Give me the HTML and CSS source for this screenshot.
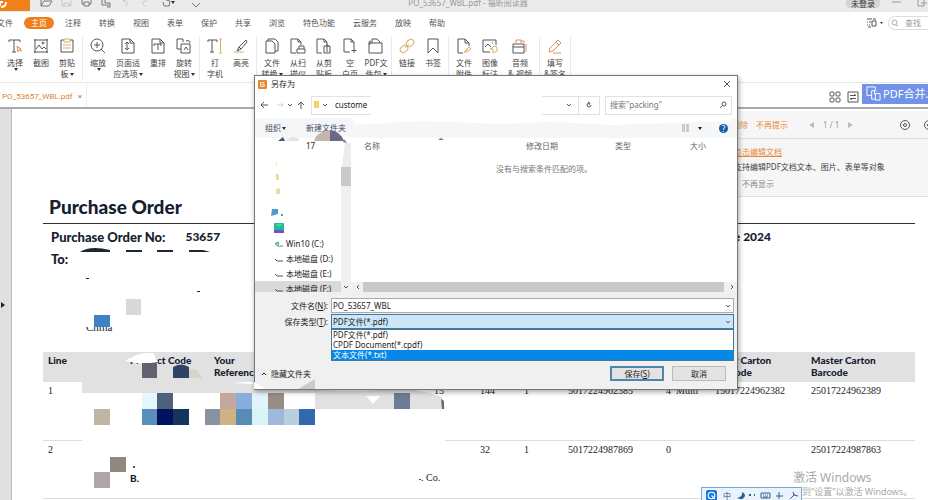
FILE: index.html
```html
<!DOCTYPE html>
<html lang="zh-CN">
<head>
<meta charset="utf-8">
<title>PO_53657_WBL.pdf - 福昕阅读器</title>
<link rel="stylesheet" href="styles.css">
</head>
<body>
<header class="titlebar">
  <div class="brand"><svg viewBox="0 0 30 12"><path d="M0 6V2h3M1 7c3 0 5-1 5-5" /></svg></div>
  <svg class="quick" viewBox="0 0 170 12">
    <path d="M3 0v6h8l3-5H6L3 6"/><g opacity=".3"><path d="M24 0v6h9V0M26 6V3h5v3"/></g>
    <path d="M44 0v4h2M53 0v4h-2M46 2h5v4h-5zM64 0v5h7M67 0v3h5v4h-3"/>
    <g opacity=".3"><path d="M85 1l3-2M85 1c4 0 6 2 2 5M109 1c-4 0-6 2-2 5"/></g>
    <path d="M125 2l1 4h5l1-5-4-1v-2M154 3l4 4 4-4"/><path class="fill" d="M133 1h4l-2 3z"/>
  </svg>
  <div class="window-title">PO_53657_WBL.pdf - 福昕阅读器</div>
  <button class="login">未登录</button>
  <svg class="winctl" viewBox="0 0 40 12"><path d="M4 2h9M30 0v6h6V0M33 3h6"/></svg>
</header>

<nav class="menubar">
  <a href="#">文件</a><a href="#" class="active">主页</a><a href="#">注释</a><a href="#">转换</a><a href="#">视图</a><a href="#">表单</a><a href="#">保护</a><a href="#">共享</a><a href="#">浏览</a><a href="#">特色功能</a><a href="#">云服务</a><a href="#">放映</a><a href="#">帮助</a>
  <div class="menu-right">
    <svg class="i-tell" viewBox="0 0 18 10"><path d="M1 1h5M1 4h1M1 7h1M3 4h2M3 7h1M6 3h4v5H6zM7 1h3M2 9h3"/><path class="fill" d="M14 4h3l-1.500 2z"/></svg>
    <label class="find"><svg viewBox="0 0 8 8"><circle cx="3.500" cy="3.500" r="2.500"/><path d="M5 6l2 1"/></svg><input type="text" placeholder="查找" aria-label="查找"></label>
  </div>
</nav>

<section class="ribbon">
  <div class="group">
    <button><svg viewBox="0 0 16 16"><path d="M2 4V2h11v2M7 2v12M5 14h4"/><path class="o" d="M10 8l1 6 1-2 3 1zM10 8l4 3"/></svg>选择<i></i></button>
    <button><svg viewBox="0 0 16 16"><path d="M1 2h14M2 1v14M14 1v14M1 14h14M3 11l3-4 3 4 2-2 2 2"/><circle cx="10" cy="5" r="1"/></svg>截图</button>
    <button><svg viewBox="0 0 16 16"><path d="M5 2H2v12h12V2h-3"/><path class="y" d="M5 1h6v3H5zM4 7h8M4 10h8"/></svg>剪贴<span>板<i></i></span></button>
  </div>
  <div class="group">
    <button><svg viewBox="0 0 16 16"><circle cx="7" cy="7" r="6"/><path d="M4 7h6M7 4v6M11 11l4 4"/></svg>缩放<i></i></button>
    <button class="wide"><svg viewBox="0 0 16 16"><path d="M2 1h8l4 4v10H2zM10 1v4h4M7 4v8M5 6l2-2 2 2M5 10l2 2 2-2"/></svg>页面适<span>应选项<i></i></span></button>
    <button><svg viewBox="0 0 16 16"><path d="M2 1h8l4 4v10H2zM10 1v4h4M4 8V6h7v2M8 6v6"/></svg>重排</button>
    <button><svg viewBox="0 0 16 16"><path d="M7 1H1v10h4M7 1v3M5 6h9v9H5zM10 3c3-1 4 0 4 2M8 12l2-3 2 3"/></svg>旋转<span>视图<i></i></span></button>
  </div>
  <div class="group">
    <button><svg viewBox="0 0 16 16"><path d="M1 4V2h9v2M5 2v12M3 14h4"/><path class="y" d="M12 1h3M13.500 1v14M12 15h3"/></svg>打<span>字机</span></button>
    <button><svg viewBox="0 0 16 16"><path d="M13 2l-7 7-2 4 4-2 6-7zM6 9l2 2"/><path class="y" d="M1 14h10"/></svg>高亮</button>
  </div>
  <div class="group">
    <button><svg viewBox="0 0 16 16"><path d="M4 3V1h7l3 3v9h-3M2 3h6l3 3v9H2z"/></svg>文件<span>转换<i></i></span></button>
    <button><svg viewBox="0 0 16 16"><path d="M6 15H1V1h7l3 3v3M8 1v3h3M7 11h8v4H7zM9 11V8h5v3"/></svg>从扫<span>描仪</span></button>
    <button><svg viewBox="0 0 16 16"><path d="M6 15H1V1h7l3 3v3M8 1v3h3M8 8h6v7H8zM10 7h2v2h-2M10 11h2M10 13h2"/></svg>从剪<span>贴板</span></button>
    <button><svg viewBox="0 0 16 16"><path d="M8 14H2V1h7l3 3v6M9 1v3h3M12 10v5M9.500 12.500h5"/></svg>空<span>白页</span></button>
    <button><svg viewBox="0 0 16 16"><path d="M4 5V1h5l3 3v1M1 5h13v10H1V4l2-1M1 7l2-2"/></svg>PDF文<span>件包<i></i></span></button>
  </div>
  <div class="group">
    <button><svg class="y" viewBox="0 0 16 16"><rect x="7" y="2" width="8" height="6" rx="3" transform="rotate(-40 11 5)"/><rect x="1" y="8" width="8" height="6" rx="3" transform="rotate(-40 5 11)"/><path d="M6 10l4-4"/></svg>链接</button>
    <button><svg viewBox="0 0 16 16"><path d="M3 1h10v14l-5-5-5 5z"/></svg>书签</button>
  </div>
  <div class="group">
    <button><svg viewBox="0 0 16 16"><path d="M7 15H2V1h7l4 4v3M9 1v4h4"/><path class="y" d="M8 14l5-5 2 2-4 3H8l4-3"/></svg>文件<span>附件</span></button>
    <button><svg viewBox="0 0 16 16"><path d="M8 14H1V2h13v5M3 9l3-3 3 3M10 5h1"/><path class="y" d="M8 11h3v4l4-2V9l-3-1-2 2z"/></svg>图像<span>标注</span></button>
    <button class="wide"><svg viewBox="0 0 16 16"><path class="o" d="M4 5V2h5v3M9 3h3v2M14 6v8"/><path d="M1 6h11v9H1zM1 9h11"/></svg>音频<span>&amp; 视频</span></button>
  </div>
  <div class="group">
    <button><svg class="o" viewBox="0 0 16 16"><path d="M3 10l8-8 3 3-8 8-4 1zM9 4l3 3M6 15h8"/></svg>填写<span>&amp;签名</span></button>
  </div>
</section>

<div class="tabs">
  <a class="tab" href="#">PO_53657_WBL.pdf<b>×</b></a>
  <svg class="i-view" viewBox="0 0 12 12"><rect x="1" y="1" width="4" height="4" rx="1"/><rect x="7" y="1" width="4" height="4" rx="1"/><rect x="1" y="7" width="4" height="4" rx="1"/><rect x="7" y="7" width="4" height="4" rx="1"/></svg>
  <svg class="i-view" viewBox="0 0 12 12"><path d="M1 1h10v10H1zM3 4.500h6l-2-1M9 7.500H3l2 1"/></svg>
  <button class="merge"><svg viewBox="0 0 16 16"><path d="M6 10H1V1h9v3M6 5h5M6 5v9h4M9 5v4M10 8h5v7h-5z"/></svg>PDF合并...</button>
</div>

<main class="workspace">
  <button class="expand" aria-label="展开"></button>
  <article class="page">
    <h1>Purchase Order</h1>
    <div class="order-line"><span>Purchase Order No:</span><span class="num">53657</span><span class="date">June 2024</span></div>
    <p class="to">To:</p>
    <p class="country">China</p>
    <table>
      <colgroup><col class="c1"><col class="c2"><col class="c3"><col class="c4"><col class="c5"><col class="c5"><col class="c6"><col class="c7"><col class="c8"><col class="c9"><col></colgroup>
      <thead><tr><th>Line</th><th>Product Code</th><th>Your<br>Reference</th><th></th><th></th><th></th><th></th><th></th><th></th><th>Inner Carton<br>Barcode</th><th>Master Carton<br>Barcode</th></tr></thead>
      <tbody>
        <tr><td>1</td><td></td><td></td><td>15</td><td>144</td><td>1</td><td>5017224962385</td><td>4</td><td>Multi</td><td>15017224962382</td><td>25017224962389</td></tr>
        <tr><td>2</td><td></td><td></td><td></td><td>32</td><td>1</td><td>5017224987869</td><td>0</td><td></td><td></td><td>25017224987863</td></tr>
      </tbody>
    </table>
  </article>
</main>

<!-- Redacted areas of the order -->
<svg class="redaction" viewBox="0 0 928 500" width="928" height="500">
  <g fill="#1d2630"><path d="M80 252q10-7 30-2v2zM126 250h16v2h-16zM157 250h16v2h-16zM189 250h14l7 2h-21zM86 278h3v1h-3zM197 291h3v1h-3z"/></g>
  <path fill="#fff" d="M84 317h34v10H84zM82 393h348l15 6v44H82zM82 453h340v32H82z"/>
  <path fill="#e1e1e1" d="M82 382h172v7h154l22 4 12 4 3 12H315v-16H82z"/>
  <path fill="#fff" d="M125 361q12-9 28-8l5 9-16 2zM366 396h14l-7 8zM317 389h70q-15 3-70 1zM231 383l14-1h8v2z"/>
  <path fill="#d8d8d8" d="M126 299h15v16h-15z"/><path fill="#3e82c6" d="M94 315h16v12H94z"/>
  <path fill="#656070" d="M142 363h15v15h-15z"/><path fill="#2d4468" d="M173 378v-11q8-5 16 0v11z"/><path fill="#d8d2cb" d="M189 378v-9l7 0 6 9z"/>
  <path fill="#e3f7fc" d="M142 393h15v16h-15z"/><path fill="#4e627e" d="M157 393h16v16h-16z"/>
  <path fill="#c6a79e" d="M220 393h16v16h-16z"/><path fill="#89aede" d="M236 393h16v16h-16z"/><path fill="#e0f4fa" d="M252 393h16v16h-16z"/><path fill="#998b86" d="M268 393h16v16h-16z"/>
  <path fill="#c0b5a0" d="M94 409h16v16H94z"/><path fill="#598ebd" d="M142 409h15v16h-15z"/><path fill="#00145e" d="M157 409h16v16h-16z"/><path fill="#14355e" d="M173 409h16v16h-16z"/>
  <path fill="#8793a3" d="M205 409h15v16h-15z"/><path fill="#d0b182" d="M220 409h16v16h-16z"/><path fill="#588cb4" d="M236 409h16v16h-16z"/><path fill="#d8f4f5" d="M252 409h16v16h-16z"/><path fill="#9fb9da" d="M268 409h16v16h-16z"/><path fill="#b9cfdd" d="M284 409h15v16h-15z"/><path fill="#3269ae" d="M299 409h16v16h-16z"/>
  <path fill="#6a7c98" d="M394 393h16v16h-16z"/><path fill="#656b73" d="M441 399l3 2v8h-2z"/>
  <path fill="#8e887d" d="M110 457h16v15h-16z"/><path fill="#b0a5a7" d="M94 472h16v16H94z"/><path fill="#555" d="M133 466h2v2h-2zM419 479h2v1h-2z"/>
</svg>
<div class="fragment">B.</div>
<div class="fragment tail">. Co.</div>

<aside class="hints">
  <div class="hint-bar"><a href="#">删除</a><a href="#">不再提示</a><span class="pager"><i class="prev"></i>1 / 1<i class="next"></i></span>
    <svg viewBox="0 0 12 12"><circle cx="6" cy="6" r="4.500"/><circle cx="6" cy="6" r="1.500"/></svg><svg viewBox="0 0 12 12"><circle cx="6" cy="6" r="4.500"/><circle cx="6" cy="6" r="1.500"/></svg></div>
  <div class="hint-body"><a href="#">点击编辑文档</a><p>支持编辑PDF文档文本、图片、表单等对象</p><p class="mute">不再显示</p></div>
</aside>

<section class="dialog" role="dialog" aria-label="另存为">
  <div class="d-title"><svg viewBox="0 0 10 10"><rect width="10" height="10" rx="1"/><path d="M7 3H3v4h4V5H5"/></svg><span>另存为</span><button aria-label="关闭"><svg viewBox="0 0 8 8"><path d="M1 1l6 6M7 1l-6 6"/></svg></button></div>
  <div class="d-address">
    <svg class="arrows" viewBox="0 0 50 10"><path d="M8 5H1M4 2L1 5l3 3"/><path opacity=".25" d="M17 5h6M21 3l2 2-2 2"/><path d="M28 4l2 2 2-2M41 9V2M38 5l3-3 3 3"/></svg>
    <div class="path"><svg viewBox="0 0 20 10"><path class="folder" d="M2 1h5v7H2z"/><path d="M11 4l2 2 2-2"/></svg><span>custome</span><svg class="drop" viewBox="0 0 8 8"><path d="M2 3l2 2 2-2"/></svg><button aria-label="刷新"><svg viewBox="0 0 8 8"><path d="M4 2a2 2 0 1 0 2 2M3 1l2 1-1 2"/></svg></button></div>
    <label class="search"><input type="text" placeholder='搜索"packing"' aria-label="搜索"><svg viewBox="0 0 8 8"><circle cx="5" cy="3" r="2"/><path d="M3 5L1 7"/></svg></label>
  </div>
  <div class="d-tools"><button>组织<i></i></button><button>新建文件夹</button><svg class="layout" viewBox="0 0 24 10"><path class="g" d="M1 1h3v8H1zM5 1h3v8H5z"/><path class="k" d="M17 4h4l-2 3z"/></svg><button class="help" aria-label="帮助">?</button></div>
  <div class="d-body">
    <ul class="drives">
      <li><svg viewBox="0 0 10 8"><path class="t" d="M1 4l3-2 1 2zM2 5l2 1h5"/></svg>Win10 (C:)</li>
      <li><svg viewBox="0 0 10 8"><path d="M1 4l2 2h6"/></svg>本地磁盘 (D:)</li>
      <li><svg viewBox="0 0 10 8"><path d="M1 4l2 2h6"/></svg>本地磁盘 (E:)</li>
      <li><svg viewBox="0 0 10 8"><path d="M1 4l2 2h6"/></svg>本地磁盘 (F:)</li>
    </ul>
    <div class="vbar"><div class="thumb"></div><svg viewBox="0 0 8 8"><path d="M2 3l2 2 2-2"/></svg></div>
    <div class="files">
      <div class="cols"><span>名称</span><span>修改日期</span><span>类型</span><span>大小</span></div>
      <p>没有与搜索条件匹配的项。</p>
      <div class="hbar"><svg viewBox="0 0 8 8"><path d="M5 2L3 4l2 2"/></svg><div class="thumb"></div><svg viewBox="0 0 8 8"><path d="M3 2l2 2-2 2"/></svg></div>
    </div>
  </div>
  <div class="d-fields">
    <label for="fname">文件名(<u>N</u>):</label>
    <div class="combo"><input id="fname" type="text" value="PO_53657_WBL"><svg viewBox="0 0 8 8"><path d="M2 3l2 2 2-2"/></svg></div>
    <label for="ftype">保存类型(<u>T</u>):</label>
    <div class="combo open"><select id="ftype"><option>PDF文件(*.pdf)</option></select><svg viewBox="0 0 8 8"><path d="M2 3l2 2 2-2"/></svg>
      <ul role="listbox"><li>PDF文件(*.pdf)</li><li>CPDF Document(*.cpdf)</li><li class="sel">文本文件(*.txt)</li></ul></div>
  </div>
  <div class="d-foot"><button class="hide"><svg viewBox="0 0 8 8"><path d="M2 5l2-2 2 2"/></svg>隐藏文件夹</button><button class="btn primary">保存(<u>S</u>)</button><button class="btn">取消</button></div>
  <svg class="smudges" viewBox="254 75 484 314" width="484" height="314">
    <path fill="#fff" d="M371 94h171v24H371zM352 117h380v4l-120 4-60-3-50 2-80-3-68 4zM290 138h12l-8 14h-30v-14z"/>
    <path fill="#fff" d="M396 101h148l-6 18-128-1zM341 137h10v12l-2 18h-8z" />
    <path fill="#ececec" d="M345 143h6v24h-9z"/>
    <path fill="#c4b5ad" d="M314 141q2-9 16-11v11z"/><path fill="#6d6788" d="M330 130q10 1 14 11h-14z"/><path fill="#405878" d="M278 141l5-4 2 4z"/><path fill="#e4e5e9" d="M286 141q5-7 13-2v2z"/>
    <path fill="#777" d="M344 139l3 4-4-1zM438 140l3-2 3 2z"/>
    <path fill="#e9dda0" d="M276 160l1 6h-1zM276 173l3 2v5h-3zM276 189l4-1v6h-4z"/>
    <path fill="#4f9bd0" d="M272 209l6 0v5l-7 2zM281 214h2v2h-2z"/><rect x="274" y="223" width="10" height="10" rx="1" fill="#20b8a5"/><path fill="#7450c8" d="M274 230h10v3h-10z"/><path fill="#45d68a" d="M275 224h8l-4 3z"/>
    <path fill="#fff" d="M254 389v-7l12 7z"/>
    <path fill="#c9cad2" d="M298 389l17-10v10z"/>
  </svg>
  <div class="item-part">17</div>
</section>

<div class="activate"><div>激活 Windows</div><p>转到“设置”以激活 Windows。</p></div>
<div class="ime"><span class="q"><svg viewBox="0 0 10 10"><circle cx="5" cy="5" r="3"/><path d="M5 5l3 3"/></svg></span><span>中</span><svg viewBox="0 0 74 12"><path class="f" d="M7 2q1 5-5 6 6 3 8-2 0-3-3-4zM14 4h2v2h-2zM19 4h1v2h-1z"/><path d="M26 3h9v5h-9zM28 5h1M30 5h1M32 5h1M28 7h5M41 6h7M44 2v7M55 9l5-5M58 2l1 3 4 1"/></svg></div>
</body>
</html>
```
FILE: styles.css
```css
* { box-sizing: border-box; }
body { margin: 0; height: 100vh; overflow: hidden; display: flex; flex-direction: column; position: relative; background: #fff; color: #333; font: 8px/10px "Noto Sans", "Noto Sans CJK SC", sans-serif; }
button, input, select { font: inherit; color: inherit; border: 0; background: none; padding: 0; margin: 0; min-width: 0; }
a { color: inherit; text-decoration: none; }
p, h1, ul { margin: 0; padding: 0; list-style: none; }
svg { fill: none; stroke: #555; stroke-width: 1; flex: none; display: block; }
svg .fill { fill: #333; stroke: none; }
i { display: inline-block; border: 2px solid transparent; border-top: 3px solid #333; border-bottom: 0; margin-left: 1px; vertical-align: middle; }

.titlebar { display: flex; height: 12px; overflow: hidden; background: #ebebeb; flex: none; position: relative; }
.brand { width: 30px; height: 11px; background: #f08019; }
.brand svg { width: 30px; height: 12px; stroke: #fff; stroke-width: 2; }
.quick { width: 170px; height: 12px; margin-left: 8px; stroke: #777; }
.window-title { position: absolute; left: 0; right: 0; top: -2px; padding-left: 8px; text-align: center; color: #999; }
.login { margin-left: auto; height: 8px; line-height: 4px; padding: 0 5px; border-radius: 0 0 4px 4px; background: #d5d5d5; color: #333; }
.winctl { width: 40px; height: 12px; margin-left: 8px; stroke: #999; }

.menubar { display: flex; align-items: center; gap: 18px; height: 22px; flex: none; margin-left: -3px; color: #555; white-space: nowrap; }
.menubar .active { background: #ee7f1b; color: #fff; border-radius: 6px; padding: 1px 7px; margin: 0 -7px; }
.menu-right { margin-left: auto; display: flex; align-items: center; gap: 4px; }
.i-tell { width: 18px; height: 10px; }
.find { display: flex; align-items: center; width: 40px; height: 14px; border: 1px solid #ddd; border-right: 0; border-radius: 7px 0 0 7px; padding-left: 2px; gap: 6px; }
.find svg { width: 8px; height: 8px; stroke: #aaa; }
.find input { width: 22px; }
input::placeholder { color: #999; opacity: 1; }

.ribbon { display: flex; height: 49px; padding: 3px 0 2px; flex: none; border-bottom: 1px solid #e8e8e8; overflow: hidden; }
.group { display: flex; padding: 0 2px; border-right: 1px solid #e8e8e8; }
.group button { width: 26px; display: flex; flex-direction: column; align-items: center; padding-top: 1px; line-height: 11px; color: #444; white-space: nowrap; }
.group button.wide { width: 34px; }
.group svg { width: 16px; height: 16px; margin-bottom: 3px; }
.group svg .o, .group svg.o { stroke: #e0935c; }
.group svg .y, .group svg.y { stroke: #d8b068; }

.tabs { display: flex; height: 26px; border-bottom: 2px solid #aaa; flex: none; align-items: center; }
.tab { display: flex; justify-content: space-between; width: 87px; padding: 4px 4px 0 2px; color: #d98532; border-right: 1px solid #eee; height: 24px; align-items: center; white-space: nowrap; font-family: Roboto, sans-serif; }
.tab b { font-weight: 400; color: #888; }
.i-view { width: 12px; height: 12px; margin-left: 6px; margin-top: 3px; }
.tab + .i-view { margin-left: auto; }
.merge { display: flex; align-items: center; gap: 2px; width: 66px; height: 20px; margin: -3px 0 0 3px; padding-left: 4px; background: #7092e8; color: #fff; font-size: 11px; white-space: nowrap; overflow: hidden; }
.merge svg { width: 15px; height: 15px; stroke: #fff; }

.workspace { flex: 1; display: flex; background: #e0e0e0; min-height: 0; }
.expand { width: 11px; display: flex; align-items: center; padding-left: 1px; }
.expand::before { content: ""; border: 3px solid transparent; border-left: 4px solid #222; border-right: 0; }
.page { flex: 1; background: #fff; border-left: 1px solid #bbb; padding: 86px 13px 0 31px; overflow: hidden; color: #15202e; font-family: Lato, sans-serif; }
h1 { font-size: 19px; line-height: 24px; font-weight: 900; padding: 0 0 4px 6px; border-bottom: 1px solid #333; }
.order-line { display: flex; font-size: 13px; line-height: 16px; font-weight: 900; padding: 5px 0 0 8px; }
.num { margin-left: 20px; font-size: 12px; }
.date { margin-left: auto; padding-right: 144px; font-size: 12px; }
.to { font-size: 13px; line-height: 16px; font-weight: 900; padding: 6px 0 0 8px; }
.country { font: 11px/12px "Liberation Serif", serif; padding: 54px 0 19px 43px; }
table { width: 100%; table-layout: fixed; border-collapse: collapse; text-align: left; color: #222; }
th { background: #e1e1e1; font-size: 10px; line-height: 12px; font-weight: 900; padding: 2px 0 4px 5px; vertical-align: top; color: #15202e; white-space: nowrap; }
td { font: 10px/12px "Liberation Serif", serif; height: 58px; padding: 3px 0 0 5px; vertical-align: top; border-bottom: 1px solid #ddd; white-space: nowrap; }
.c1 { width: 82px; } .c2 { width: 84px; } .c3 { width: 220px; } .c4 { width: 46px; } .c5 { width: 44px; } .c6 { width: 98px; } .c7 { width: 10px; } .c8 { width: 39px; } .c9 { width: 96px; }

.redaction { position: absolute; left: 0; top: 0; stroke: none; pointer-events: none; }
.fragment { position: absolute; left: 130px; top: 473px; font: 900 10px/11px Lato, sans-serif; color: #15202e; }
.fragment.tail { left: 421px; top: 472px; font: 10px/12px "Liberation Serif", serif; }

.hints { position: absolute; right: 0; top: 111px; width: 220px; background: #f6f6f6; color: #444; white-space: nowrap; overflow: hidden; }
.hint-bar { display: flex; align-items: center; height: 28px; padding-left: 24px; gap: 8px; border-bottom: 1px solid #ddd; color: #e68a3a; }
.pager { display: flex; align-items: center; gap: 9px; margin-left: 13px; color: #999; }
.pager i { border: 3px solid transparent; margin: 0; }
.pager .prev { border-right: 5px solid #bbb; border-left: 0; }
.pager .next { border-left: 5px solid #bbb; border-right: 0; }
.hint-bar svg { width: 12px; height: 12px; margin-left: 4px; }
.pager + svg { margin-left: auto; }
.hint-bar svg:last-child { margin-right: -7px; }
.hint-body { padding: 8px 0 7px 26px; border-bottom: 1px solid #ddd; }
.hint-body a { color: #e68a3a; text-decoration: underline; }
.hint-body p { padding-top: 5px; }
.hint-body .mute { color: #888; padding: 7px 0 0 8px; }

.dialog { position: absolute; left: 254px; right: 190px; top: 75px; background: #fff; border: 1px solid #777; box-shadow: 1px 2px 5px rgba(0,0,0,.35); }
.d-title { display: flex; align-items: center; height: 16px; padding: 0 6px 0 3px; gap: 4px; color: #222; }
.d-title > svg { width: 9px; height: 9px; stroke: #fff; }
.d-title rect { fill: #e58a2e; stroke: none; }
.d-title button { margin-left: auto; }
.d-title button svg { width: 8px; height: 8px; }
.d-address { display: flex; align-items: center; height: 26px; padding: 0 5px; }
.arrows { width: 50px; height: 10px; }
.path { display: flex; align-items: center; height: 19px; border: 1px solid #e2e2e2; flex: 1; margin: 0 5px 0 1px; color: #222; }
.path svg { width: 20px; height: 10px; margin-right: 3px; }
.path .folder { fill: #f0d372; stroke: none; }
.path .drop { width: 8px; height: 8px; margin: 0 5px 0 auto; }
.path button { border-left: 1px solid #e2e2e2; width: 21px; height: 17px; padding-left: 6px; }
.path button svg { width: 8px; height: 8px; margin: 0; }
.search { display: flex; align-items: center; width: 127px; height: 19px; border: 1px solid #e2e2e2; padding: 0 4px; }
.search input { flex: 1; }
.search input::placeholder { color: #777; }
.search svg { width: 8px; height: 8px; }
.d-tools { display: flex; align-items: center; height: 20px; background: #f5f6f7; padding: 0 9px 0 10px; color: #3c4a66; gap: 20px; }
.layout { width: 24px; height: 10px; margin-left: auto; }
.layout .g { fill: #ccc; stroke: none; } .layout .k { fill: #222; stroke: none; }
.help { width: 9px; height: 9px; border-radius: 50%; background: #1460a8; color: #fff; line-height: 9px; text-align: center; margin-left: -6px; }
.d-body { display: flex; height: 154px; }
.drives { width: 86px; padding-top: 98px; overflow: hidden; color: #222; }
.drives li { display: flex; align-items: center; height: 15px; padding-left: 19px; gap: 2px; white-space: nowrap; }
.drives li:last-child { background: #d9d9d9; }
.drives svg { width: 10px; height: 8px; }
.drives .t { stroke: #497; }
.vbar { width: 10px; background: #f0f0f0; padding-top: 29px; display: flex; flex-direction: column; justify-content: space-between; }
.vbar .thumb { height: 19px; background: #c9c9c9; }
.vbar svg, .hbar svg { width: 8px; height: 8px; margin: 1px; }
.files { flex: 1; display: flex; flex-direction: column; color: #777; }
.cols { display: grid; grid-template-columns: 162px 89px 75px 1fr; padding: 3px 0 0 13px; color: #666; }
.files p { text-align: center; padding-top: 13px; color: #777; }
.hbar { margin-top: auto; display: flex; background: #f0f0f0; padding-left: 2px; height: 10px; }
.hbar .thumb { flex: 1; background: #c9c9c9; margin: 0 3px 0 0; }
.d-fields { display: grid; grid-template-columns: 73px 1fr; column-gap: 3px; row-gap: 1px; padding: 6px 3px 0 0; background: #f0f0f0; color: #222; text-align: right; align-items: center; }
.combo { display: flex; align-items: center; height: 15px; border: 1px solid #aaa; background: #fff; position: relative; padding: 0 1px; }
.combo input, .combo select { flex: 1; appearance: none; text-align: left; height: 13px; }
.combo svg { width: 8px; height: 8px; }
.combo.open { background: #cce6f8; border-color: #42789e; }
.combo ul { position: absolute; left: -1px; right: -1px; top: 14px; border: 1px solid #42789e; background: #fff; text-align: left; z-index: 2; }
.combo li { padding-left: 1px; }
.combo .sel { background: #0788e8; color: #fff; }
.d-foot { display: flex; align-items: center; gap: 8px; background: #f0f0f0; padding: 37px 11px 8px 5px; color: #222; }
.hide { display: flex; align-items: center; gap: 3px; margin-right: auto; }
.hide svg { width: 8px; height: 8px; stroke: #222; }
.btn { width: 54px; height: 15px; background: #e3e3e3; border: 1px solid #bbb; }
.btn.primary { border: 2px solid #4c86a8; line-height: 10px; }
.smudges { position: absolute; left: -1px; top: -1px; stroke: none; pointer-events: none; }
.item-part { position: absolute; left: 51px; top: 65px; color: #222; }

.activate { position: absolute; right: 12px; bottom: 3px; width: 123px; color: #aaa; white-space: nowrap; font-size: 12px; line-height: 16px; }
.activate p { font-size: 9px; line-height: 11px; }
.ime { position: absolute; left: 701px; top: 487px; display: flex; align-items: center; gap: 6px; width: 101px; height: 17px; padding-left: 4px; border: 1px solid #79a9d0; background: #eaf3fb; color: #245a95; }
.ime .q { background: #1a7ae0; border-radius: 2px; width: 11px; height: 11px; }
.ime .q svg { width: 11px; height: 11px; stroke: #fff; }
.ime > svg { width: 74px; height: 12px; stroke: #2b609a; margin-left: -2px; }
.ime .f { fill: #2b609a; stroke: none; }
```
